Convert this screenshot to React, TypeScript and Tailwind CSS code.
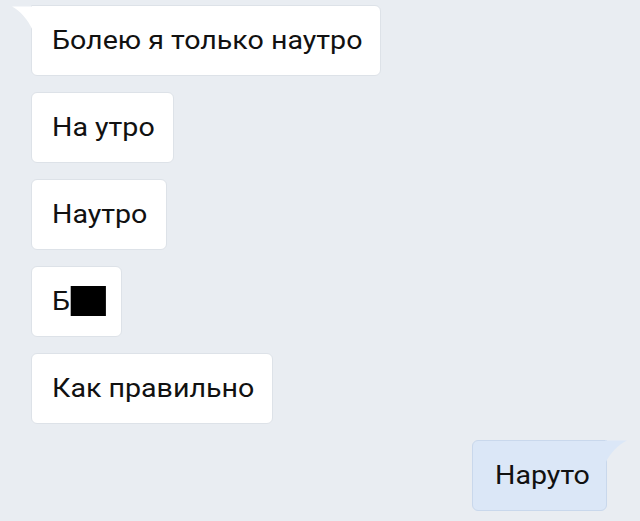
import React from 'react';

type Msg = { text: React.ReactNode; width: string; out?: boolean; tail?: boolean };

// the source screenshot is stretched sideways, so text is widened with scale-x
const messages: Msg[] = [
  { text: 'Болею я только наутро', width: 'w-[350px]', tail: true },
  { text: 'На утро', width: 'w-[143px]' },
  { text: 'Наутро', width: 'w-[136px]' },
  {
    text: (
      <span className="flex items-center">
        Б<span className="inline-block w-[32px] h-[30px] bg-black ml-[1px]" />
      </span>
    ),
    width: 'w-[91px]',
  },
  { text: 'Как правильно', width: 'w-[242px]' },
  { text: 'Наруто', width: 'w-[135px]', out: true, tail: true },
];

const Bubble: React.FC<{ msg: Msg }> = ({ msg }) => {
  const base = msg.out
    ? 'bg-[#dbe7f7] border-[#c9d8ec] self-end mr-[33px] pl-[22px]'
    : 'bg-white border-[#dde2e8] self-start ml-[31px] pl-[20px]';
  return (
    <div
      className={`relative h-[71px] ${msg.width} flex items-center rounded-[6px] border ${base} ${
        msg.tail ? (msg.out ? 'rounded-tr-none' : 'rounded-tl-none') : ''
      }`}
    >
      {msg.tail && !msg.out && (
        <svg className="absolute -left-[20px] -top-px" width="21" height="26" viewBox="0 0 21 26">
          <path d="M0 1.5 H21 V26 C16 14 8 6 0 1.5 Z" fill="#ffffff" />
        </svg>
      )}
      {msg.tail && msg.out && (
        <svg className="absolute -right-[21px] -top-px" width="22" height="24" viewBox="0 0 22 24">
          <path d="M22 0.5 H0 V24 C5 13 13 5 22 0.5 Z" fill="#dbe7f7" />
        </svg>
      )}
      <span className="inline-block origin-left scale-x-[1.1] text-[26px] text-[#111] leading-none whitespace-nowrap -mt-[2px]">
        {msg.text}
      </span>
    </div>
  );
};

export default function App() {
  return (
    <div
      className="w-[640px] h-[521px] bg-[#e9edf2] overflow-hidden flex flex-col gap-[16px] pt-[5px]"
      style={{ fontFamily: 'Roboto, "Noto Sans", sans-serif' }}
    >
      {messages.map((m, i) => (
        <Bubble key={i} msg={m} />
      ))}
    </div>
  );
}
